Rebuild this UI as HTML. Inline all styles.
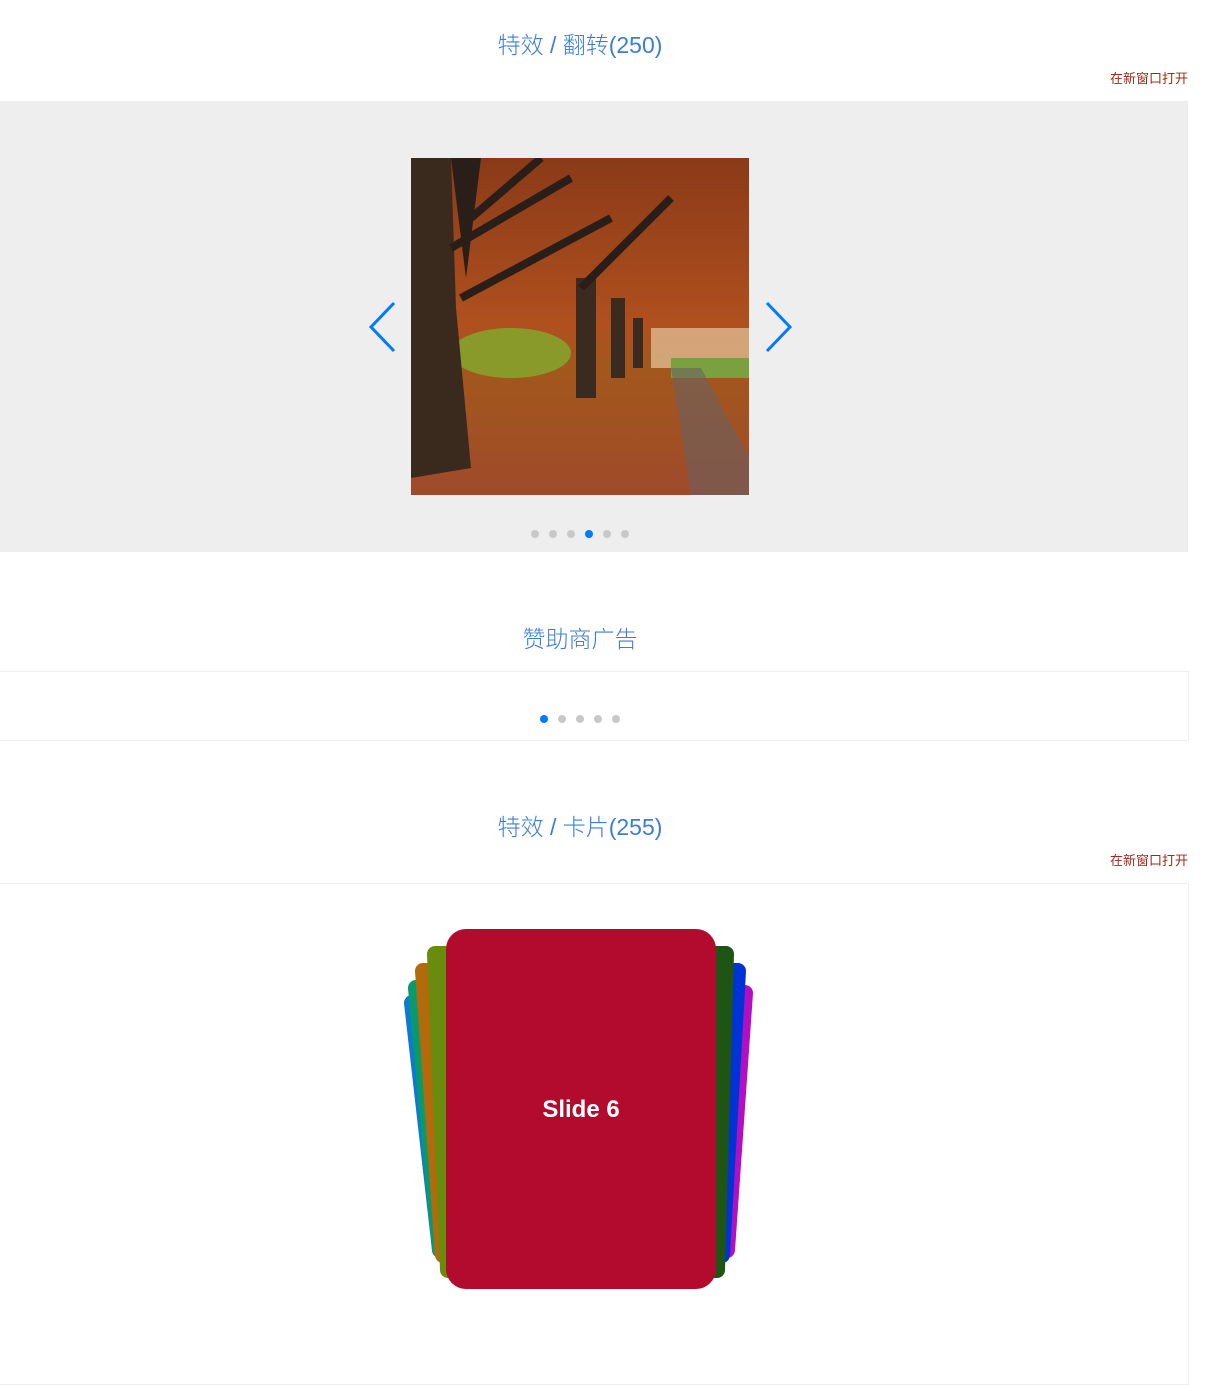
<!DOCTYPE html>
<html><head><meta charset="utf-8"><style>
body{margin:0;width:1220px;height:1317px;background:#fff;font-family:"Liberation Sans","Noto Sans CJK SC",sans-serif;position:relative;overflow:hidden}
.t{position:absolute;left:0;width:1160px;text-align:center;font-size:23px;color:#3b7dd8;font-weight:300}
.l{position:absolute;right:32px;font-size:13px;color:#a0281a}
.d{position:absolute;width:8px;height:8px;border-radius:50%;background:#c8c8c8}
.d.a{background:#007aff}
svg polygon{stroke-linejoin:round;stroke-width:16}
</style></head><body>
<div class="t" style="top:26px">特效 / 翻转(250)</div>
<div class="l" style="top:68px">在新窗口打开</div>
<div style="position:absolute;left:0;top:101px;width:1188px;height:451px;background:#eee"></div>
<svg style="position:absolute;left:411px;top:158px" width="338" height="337" viewBox="0 0 338 337">
<defs><linearGradient id="g" x1="0" y1="0" x2="0" y2="1"><stop offset="0" stop-color="#8a3a18"/><stop offset=".5" stop-color="#b0501e"/><stop offset=".62" stop-color="#a2581c"/><stop offset="1" stop-color="#a04a2a"/></linearGradient></defs>
<rect width="338" height="337" fill="url(#g)"/>
<rect x="240" y="170" width="98" height="40" fill="#e6c8a0" opacity=".7"/>
<ellipse cx="100" cy="195" rx="60" ry="25" fill="#8a9a2a"/>
<rect x="260" y="200" width="78" height="20" fill="#7aa040"/>
<polygon points="260,210 290,210 338,300 338,337 280,337" fill="#6a6060" opacity=".6" style="stroke:none"/>
<polygon points="0,0 40,0 45,150 60,310 0,320" fill="#3a2a1e" style="stroke:none"/>
<polygon points="40,0 70,0 55,120" fill="#2a1e18" style="stroke:none"/>
<rect x="165" y="120" width="20" height="120" fill="#3a2a20"/>
<rect x="200" y="140" width="14" height="80" fill="#3a2a20"/>
<rect x="222" y="160" width="10" height="50" fill="#3a2a20"/>
<path d="M40 90 L160 20 M50 140 L200 60 M170 130 L260 40 M60 60 L130 0" stroke="#2a1e18" stroke-width="8"/>
</svg>
<svg style="position:absolute;left:366px;top:300px" width="34" height="54"><path d="M28 3 L5 27 L28 51" fill="none" stroke="#007aff" stroke-width="3"/></svg>
<svg style="position:absolute;left:762px;top:300px" width="34" height="54"><path d="M5 3 L28 27 L5 51" fill="none" stroke="#007aff" stroke-width="3"/></svg>
<div class="d" style="left:531px;top:530px"></div><div class="d" style="left:549px;top:530px"></div><div class="d" style="left:567px;top:530px"></div><div class="d a" style="left:585px;top:530px"></div><div class="d" style="left:603px;top:530px"></div><div class="d" style="left:621px;top:530px"></div>

<div class="t" style="top:620px">赞助商广告</div>
<div style="position:absolute;left:-1px;top:671px;width:1188px;height:68px;border:1px solid #eee"></div>
<div class="d a" style="left:540px;top:715px"></div><div class="d" style="left:558px;top:715px"></div><div class="d" style="left:576px;top:715px"></div><div class="d" style="left:594px;top:715px"></div><div class="d" style="left:612px;top:715px"></div>

<div class="t" style="top:808px">特效 / 卡片(255)</div>
<div class="l" style="top:850px">在新窗口打开</div>
<div style="position:absolute;left:-1px;top:883px;width:1188px;height:500px;border:1px solid #eee"></div>
<svg style="position:absolute;left:0;top:0" width="1220" height="1317">
<polygon points="412,1003 470,1003 470,1250 440,1250" fill="#0a7ad6" stroke="#0a7ad6"/>
<polygon points="416,988 470,988 470,1250 440,1250" fill="#0a9a6a" stroke="#0a9a6a"/>
<polygon points="423,971 470,971 470,1255 443,1255" fill="#b36a0a" stroke="#b36a0a"/>
<polygon points="435,954 470,954 470,1270 448,1270" fill="#6a8c0e" stroke="#6a8c0e"/>
<polygon points="700,993 745,993 727,1250 700,1250" fill="#b010c0" stroke="#b010c0"/>
<polygon points="700,971 738,971 722,1255 700,1255" fill="#0033d6" stroke="#0033d6"/>
<polygon points="700,954 726,954 717,1270 700,1270" fill="#1f5514" stroke="#1f5514"/>
<rect x="446" y="929" width="270" height="360" rx="20" fill="#b20b2e"/>
<text x="581" y="1117" text-anchor="middle" fill="#fff" font-family="Liberation Sans" font-weight="bold" font-size="24">Slide 6</text>
</svg>
</body></html>
